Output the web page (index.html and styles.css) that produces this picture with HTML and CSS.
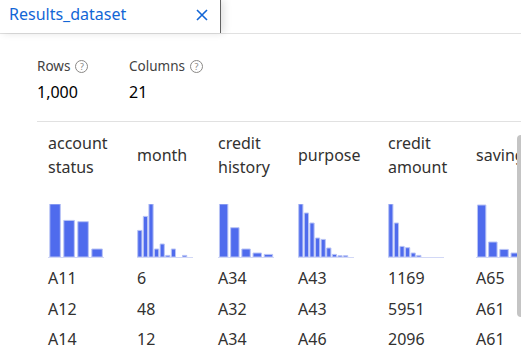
FILE: index.html
```html
<!DOCTYPE html>
<html lang="en">
<head>
    <meta charset="UTF-8">
    <meta name="viewport" content="width=device-width, initial-scale=1.0">
    <title>Results_dataset</title>
    <link rel="stylesheet" href="styles.css">
</head>
<body>
    <div class="tabbar">
        <div class="tab">
            <span class="tab-title">Results_dataset</span>
            <svg class="tab-close" width="12" height="12" viewBox="0 0 12 12">
                <path d="M1 1 L11 11 M11 1 L1 11" stroke="currentColor" stroke-width="1.6" fill="none"/>
            </svg>
        </div>
    </div>

    <main class="content">
        <div class="stats">
            <div class="stat">
                <div class="stat-label">Rows <span class="help">?</span></div>
                <div class="stat-value">1,000</div>
            </div>
            <div class="stat">
                <div class="stat-label">Columns <span class="help">?</span></div>
                <div class="stat-value">21</div>
            </div>
        </div>

        <!-- Column profile grid -->
        <div class="table">
            <div class="head">account status</div>
            <div class="head">month</div>
            <div class="head">credit history</div>
            <div class="head">purpose</div>
            <div class="head">credit amount</div>
            <div class="head">savings</div>

            <div class="chart">
                <svg class="hist" viewBox="0 0 4 53" preserveAspectRatio="none">
                    <rect x="0.13" y="0" width="0.75" height="53"/>
                    <rect x="1.13" y="16.4" width="0.75" height="36.6"/>
                    <rect x="2.13" y="17.7" width="0.75" height="35.3"/>
                    <rect x="3.13" y="45" width="0.75" height="8"/>
                </svg>
            </div>
            <div class="chart">
                <svg class="hist" viewBox="0 0 10 53" preserveAspectRatio="none">
                    <rect x="0.13" y="26.4" width="0.75" height="26.6"/>
                    <rect x="1.13" y="12.4" width="0.75" height="40.6"/>
                    <rect x="2.13" y="0" width="0.75" height="53"/>
                    <rect x="3.13" y="45" width="0.75" height="8"/>
                    <rect x="4.13" y="40" width="0.75" height="13"/>
                    <rect x="5.13" y="51.4" width="0.75" height="1.6"/>
                    <rect x="6.13" y="45" width="0.75" height="8"/>
                    <rect x="8.13" y="51.4" width="0.75" height="1.6"/>
                </svg>
            </div>
            <div class="chart">
                <svg class="hist" viewBox="0 0 5 53" preserveAspectRatio="none">
                    <rect x="0.13" y="0" width="0.75" height="53"/>
                    <rect x="1.13" y="23.7" width="0.75" height="29.3"/>
                    <rect x="2.13" y="45" width="0.75" height="8"/>
                    <rect x="3.13" y="49" width="0.75" height="4"/>
                    <rect x="4.13" y="50.4" width="0.75" height="2.6"/>
                </svg>
            </div>
            <div class="chart">
                <svg class="hist" viewBox="0 0 10 53" preserveAspectRatio="none">
                    <rect x="0.13" y="0" width="0.75" height="53"/>
                    <rect x="1.13" y="9" width="0.75" height="44"/>
                    <rect x="2.13" y="19" width="0.75" height="34"/>
                    <rect x="3.13" y="34" width="0.75" height="19"/>
                    <rect x="4.13" y="35.4" width="0.75" height="17.6"/>
                    <rect x="5.13" y="44" width="0.75" height="9"/>
                    <rect x="6.13" y="50.4" width="0.75" height="2.6"/>
                    <rect x="7.13" y="51.7" width="0.75" height="1.3"/>
                    <rect x="8.13" y="51.7" width="0.75" height="1.3"/>
                </svg>
            </div>
            <div class="chart">
                <svg class="hist" viewBox="0 0 10 53" preserveAspectRatio="none">
                    <rect x="0.13" y="0" width="0.75" height="53"/>
                    <rect x="1.13" y="19" width="0.75" height="34"/>
                    <rect x="2.13" y="42.4" width="0.75" height="10.6"/>
                    <rect x="3.13" y="43.7" width="0.75" height="9.3"/>
                    <rect x="4.13" y="49" width="0.75" height="4"/>
                    <rect x="5.13" y="51.4" width="0.75" height="1.6"/>
                </svg>
            </div>
            <div class="chart">
                <svg class="hist" viewBox="0 0 5 53" preserveAspectRatio="none">
                    <rect x="0.13" y="1" width="0.75" height="52"/>
                    <rect x="1.13" y="38" width="0.75" height="15"/>
                    <rect x="2.13" y="45.4" width="0.75" height="7.6"/>
                    <rect x="3.13" y="49" width="0.75" height="4"/>
                    <rect x="4.13" y="51" width="0.75" height="2"/>
                </svg>
            </div>

            <div class="cell">A11</div>
            <div class="cell">6</div>
            <div class="cell">A34</div>
            <div class="cell">A43</div>
            <div class="cell">1169</div>
            <div class="cell">A65</div>

            <div class="cell">A12</div>
            <div class="cell">48</div>
            <div class="cell">A32</div>
            <div class="cell">A43</div>
            <div class="cell">5951</div>
            <div class="cell">A61</div>

            <div class="cell">A14</div>
            <div class="cell">12</div>
            <div class="cell">A34</div>
            <div class="cell">A46</div>
            <div class="cell">2096</div>
            <div class="cell">A61</div>
        </div>
    </main>

    <div class="vscroll"></div>
</body>
</html>
```

FILE: styles.css
```css
body {
    font-family: "Noto Sans", "Open Sans", sans-serif;
    margin: 0;
    padding: 0;
    background-color: #ffffff;
    color: #323130;
    overflow: hidden;
    width: 521px;
    height: 352px;
    position: relative;
}
.tabbar {
    display: flex;
    height: 33px;
    border-bottom: 1px solid #e1e1e1;
}
.tab {
    display: flex;
    align-items: center;
    justify-content: space-between;
    box-sizing: border-box;
    width: 221px;
    height: 33px;
    padding: 0 12px 6px 9px;
    border-right: 1px solid #616161;
    box-shadow: 3px 0 8px rgba(0, 0, 0, 0.12);
    background-color: #ffffff;
}
.tab-title {
    font-size: 16px;
    line-height: 22px;
    color: #1366d6;
}
.tab-close {
    display: block;
    color: #1366d6;
    margin-top: 3px;
}
.content {
    padding: 22px 0 0 37px;
}
.stats {
    display: flex;
}
.stat {
    width: 92px;
}
.stat-label {
    display: flex;
    align-items: center;
    font-size: 13.5px;
    line-height: 20px;
    color: #424242;
    margin-bottom: 5px;
}
.help {
    display: inline-flex;
    align-items: center;
    justify-content: center;
    box-sizing: border-box;
    width: 13px;
    height: 13px;
    margin-left: 5px;
    border: 1px solid #8a8886;
    border-radius: 50%;
    font-size: 9px;
    line-height: 1;
    color: #8a8886;
}
.stat-value {
    font-size: 16px;
    line-height: 22px;
    color: #000000;
}
.table {
    display: grid;
    grid-template-columns: 89px 81px 80px 90px 88px 90px;
    margin-top: 18px;
    padding-left: 11px;
    border-top: 1px solid #e1e1e1;
}
.head {
    display: flex;
    align-items: center;
    height: 66px;
    padding-right: 8px;
    font-size: 16px;
    line-height: 24px;
    overflow: hidden;
}
.chart {
    padding-top: 16px;
    margin-bottom: 5px;
}
.hist {
    display: block;
    width: 56px;
    height: 53px;
    border-bottom: 1px solid #d2d8f6;
}
.hist rect {
    fill: #4f6bed;
    stroke: #b8c3f5;
    stroke-width: 1;
    vector-effect: non-scaling-stroke;
}
.cell {
    font-size: 16px;
    line-height: 30.5px;
    white-space: nowrap;
}
.vscroll {
    position: absolute;
    top: 135px;
    right: -4px;
    width: 8px;
    height: 182px;
    border-radius: 4px;
    background-color: #c4c4c4;
}
```
